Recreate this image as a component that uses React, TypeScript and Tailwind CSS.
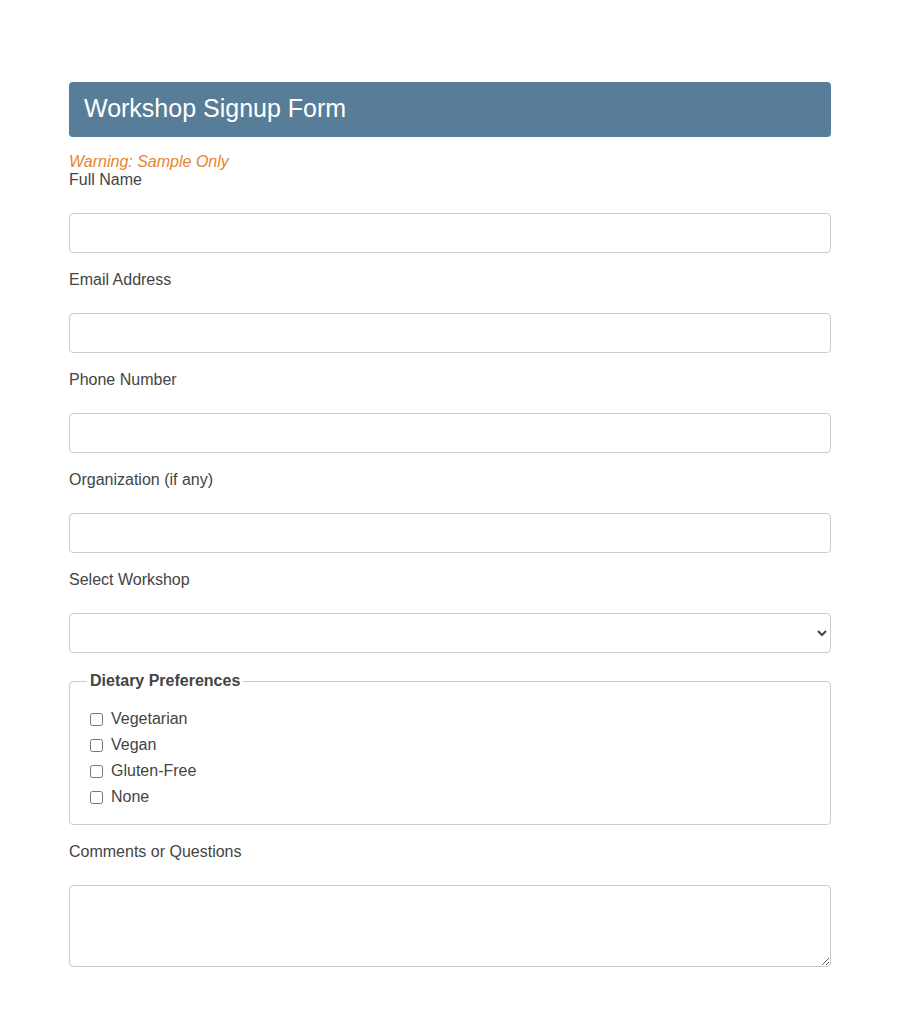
import * as React from "react"

const fields = [
  { id: "fullName", label: "Full Name", type: "text" },
  { id: "email", label: "Email Address", type: "email" },
  { id: "phone", label: "Phone Number", type: "tel" },
  { id: "org", label: "Organization (if any)", type: "text" },
]

const diets = ["Vegetarian", "Vegan", "Gluten-Free", "None"]

export default function App() {
  return (
    <div className="min-h-screen bg-white px-[69px] pt-[82px] pb-[40px] text-[16px] leading-[18px] text-[#444] font-['Liberation_Sans',Arial,sans-serif]">
      {/* Header */}
      <div className="h-[55px] rounded-[4px] bg-[#587d98] px-[15px] flex items-center">
        <h1 className="text-[25px] text-white leading-none -mt-[2px]">Workshop Signup Form</h1>
      </div>

      <p className="mt-[15px] italic text-[#e8842c] leading-[19px]">Warning: Sample Only</p>

      <form onSubmit={(e) => e.preventDefault()}>
        {fields.map((f, i) => (
          <div key={f.id} className={i === 0 ? "" : "mt-[18px]"}>
            <label htmlFor={f.id} className="block leading-[18px]">{f.label}</label>
            <input
              id={f.id}
              type={f.type}
              className="mt-[24px] block w-full h-[40px] rounded-[4px] border border-[#ccc] px-[10px] outline-none"
            />
          </div>
        ))}

        <div className="mt-[18px]">
          <label htmlFor="workshop" className="block leading-[18px]">Select Workshop</label>
          <select
            id="workshop"
            className="mt-[24px] block w-full h-[40px] rounded-[4px] border border-[#ccc] bg-white px-[6px] text-[#444]"
          >
            <option value=""></option>
          </select>
        </div>

        {/* Dietary preferences */}
        <fieldset className="mt-[19px] rounded-[4px] border border-[#ccc] pl-[20px] pr-[20px] pt-[16px] pb-[14px]">
          <legend className="-ml-[3px] px-[3px] font-bold leading-[18px]">Dietary Preferences</legend>
          {diets.map((d) => (
            <label key={d} className="flex items-center h-[26px]">
              <input type="checkbox" className="w-[13px] h-[13px] mr-[8px]" />
              <span>{d}</span>
            </label>
          ))}
        </fieldset>

        <div className="mt-[18px]">
          <label htmlFor="comments" className="block leading-[18px]">Comments or Questions</label>
          <textarea
            id="comments"
            className="mt-[24px] block w-full h-[82px] rounded-[4px] border border-[#ccc] px-[10px] py-[8px] outline-none"
          />
        </div>
      </form>
    </div>
  )
}
